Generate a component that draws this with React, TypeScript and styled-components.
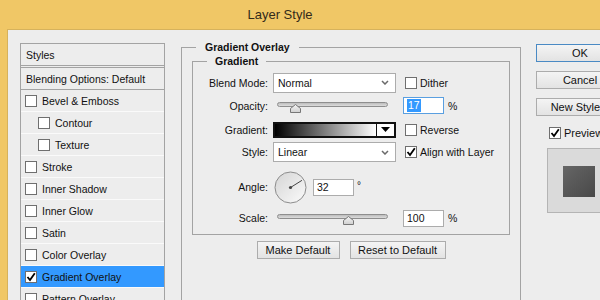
import React from "react";
import styled, { createGlobalStyle } from "styled-components";

const GlobalStyle = createGlobalStyle`
  html, body { margin: 0; padding: 0; }
  body {
    width: 600px;
    height: 300px;
    overflow: hidden;
    font-family: "Liberation Sans", Arial, sans-serif;
    font-size: 10.5px;
    color: #111;
  }
`;

const styleItems = [
  { label: "Bevel & Emboss" },
  { label: "Contour", sub: true },
  { label: "Texture", sub: true },
  { label: "Stroke" },
  { label: "Inner Shadow" },
  { label: "Inner Glow" },
  { label: "Satin" },
  { label: "Color Overlay" },
  { label: "Gradient Overlay", checked: true, selected: true },
  { label: "Pattern Overlay" },
  { label: "Outer Glow" },
  { label: "Drop Shadow" },
];

const Window = styled.div`
  width: 600px;
  height: 300px;
  background: #f0c766;
  display: flex;
  flex-direction: column;
  overflow: hidden;
`;

const TitleBar = styled.div`
  flex: none;
  height: 29px;
  display: flex;
  align-items: center;
  justify-content: center;
  padding-right: 40px;
  font-size: 13px;
  color: #332b1a;
`;

const Body = styled.div`
  flex: 1;
  min-height: 0;
  margin-left: 7px;
  background: #ededed;
  border-top: 1px solid #d6b25c;
  border-left: 1px solid #d6b25c;
  display: flex;
  padding-left: 12px;
  overflow: hidden;
`;

const StylesPanel = styled.div`
  flex: none;
  width: 145px;
  box-sizing: border-box;
  margin-top: 13px;
  border: 1px solid #a3a3a3;
  border-bottom: none;
  height: 300px;
`;

const PanelHead = styled.div<{ $first?: boolean }>`
  height: 21px;
  display: flex;
  align-items: center;
  padding-left: 5px;
  border-bottom: 1px solid #a3a3a3;
  border-top: ${(p) => (p.$first ? "none" : "1px solid #a3a3a3")};
  margin-top: ${(p) => (p.$first ? 0 : 1)}px;
`;

const StyleRow = styled.div<{ $sub?: boolean; $selected?: boolean }>`
  height: 21px;
  display: flex;
  align-items: center;
  gap: 5px;
  padding-left: ${(p) => (p.$sub ? 17 : 4)}px;
  border-bottom: 1px solid #fafafa;
  background: ${(p) => (p.$selected ? "#3399ff" : "transparent")};
  color: #111;
`;

const Box = styled.span`
  flex: none;
  width: 12px;
  height: 12px;
  box-sizing: border-box;
  border: 1px solid #6f6f6f;
  background: #fff;
  display: inline-flex;
  align-items: center;
  justify-content: center;
`;

const Check = ({ checked }: { checked?: boolean }) => (
  <Box>
    {checked && (
      <svg width="10" height="10" viewBox="0 0 10 10">
        <path d="M1.5 5 L4 8 L8.8 1.2" fill="none" stroke="#000" strokeWidth="1.8" />
      </svg>
    )}
  </Box>
);

const MainCol = styled.div`
  flex: none;
  width: 340px;
  margin-left: 16px;
  margin-top: 10px;
`;

const Group = styled.fieldset<{ $outer?: boolean }>`
  margin: 0;
  min-width: 0;
  box-sizing: border-box;
  border: 1px solid #a3a3a3;
  padding: ${(p) => (p.$outer ? "0 10px" : "4px 0 9px")};
  height: ${(p) => (p.$outer ? "300px" : "auto")};
`;

const GroupTitle = styled.legend<{ $indent: number; $pad: number }>`
  margin-left: ${(p) => p.$indent}px;
  padding: 0 ${(p) => p.$pad}px;
  font-weight: bold;
  line-height: 14px;
  font-size: 10.5px;
  color: #111;
`;

const Row = styled.div<{ $h: number }>`
  height: ${(p) => p.$h}px;
  display: flex;
  align-items: center;
`;

const Label = styled.span`
  flex: none;
  width: 80px;
  box-sizing: border-box;
  padding-right: 5px;
  text-align: right;
`;

const SelectBox = styled.div`
  flex: none;
  width: 123px;
  height: 20px;
  box-sizing: border-box;
  border: 1px solid #acacac;
  background: #fff;
  display: flex;
  align-items: center;
  justify-content: space-between;
  padding: 0 6px 0 4px;
`;

const Chevron = () => (
  <svg width="8" height="5" viewBox="0 0 8 5">
    <polyline points="1,1 4,4 7,1" fill="none" stroke="#6a6a6a" strokeWidth="1.5" />
  </svg>
);

const Side = styled.label<{ $ml: number }>`
  display: flex;
  align-items: center;
  gap: 3px;
  margin-left: ${(p) => p.$ml}px;
`;

const SliderBox = styled.div`
  flex: none;
  position: relative;
  width: 123px;
  height: 14px;
`;

const Track = styled.div`
  margin: 3px 8px 0 4px;
  height: 5px;
  box-sizing: border-box;
  border: 1px solid #8e8e8e;
  border-radius: 3px;
  background: linear-gradient(#bdbdbd, #dcdcdc);
`;

const Thumb = styled.svg`
  position: absolute;
  top: 5px;
  margin-left: -5.5px;
`;

const Slider = ({ at }: { at: number }) => (
  <SliderBox>
    <Track />
    <Thumb width="11" height="9" viewBox="0 0 11 9" style={{ left: 4 + at * 111 }}>
      <defs>
        <linearGradient id="tg" x1="0" y1="0" x2="0" y2="1">
          <stop offset="0" stopColor="#f6f6f6" />
          <stop offset="1" stopColor="#cfcfcf" />
        </linearGradient>
      </defs>
      <path d="M5.5 0.5 L10.5 4.5 L10.5 8.5 L0.5 8.5 L0.5 4.5 Z" fill="url(#tg)" stroke="#777" />
    </Thumb>
  </SliderBox>
);

const NumInput = styled.div<{ $focus?: boolean; $ml: number }>`
  flex: none;
  width: 41px;
  height: 17px;
  box-sizing: border-box;
  margin-left: ${(p) => p.$ml}px;
  border: 1px solid ${(p) => (p.$focus ? "#5a9fe0" : "#acacac")};
  background: #fff;
  display: flex;
  align-items: center;
  padding-left: 3px;
`;

const Selected = styled.span`
  background: #3399ff;
  color: #fff;
  line-height: 13px;
  padding: 0 1px;
`;

const Unit = styled.span`
  margin-left: 4px;
`;

const Degree = styled.span`
  margin-left: 3px;
  align-self: flex-start;
  margin-top: 17px;
  font-size: 10px;
`;

const GradientPick = styled.div`
  flex: none;
  width: 123px;
  height: 16px;
  box-sizing: border-box;
  border: 2px solid #111;
  display: flex;
`;

const Ramp = styled.div`
  flex: 1;
  background: linear-gradient(to right, #000, #fff);
`;

const Drop = styled.div`
  flex: none;
  width: 17px;
  border-left: 1px solid #111;
  background: #fff;
  display: flex;
  align-items: center;
  justify-content: center;
`;

const Dial = styled.svg`
  flex: none;
  margin-left: 1px;
`;

const ButtonRow = styled.div`
  display: flex;
  justify-content: center;
  gap: 10px;
  margin-top: 6px;
`;

const Button = styled.div<{ $w: number; $focus?: boolean }>`
  flex: none;
  width: ${(p) => p.$w}px;
  height: 18px;
  box-sizing: border-box;
  border: 1px solid ${(p) => (p.$focus ? "#4a8ac4" : "#acacac")};
  background: linear-gradient(#f4f4f4, #e3e3e3);
  display: flex;
  align-items: center;
  justify-content: center;
  white-space: nowrap;
  font-size: 11px;
`;

const RightCol = styled.div`
  flex: none;
  width: 88px;
  margin-left: 15px;
  margin-top: 14px;
  display: flex;
  flex-direction: column;
  gap: 9px;
`;

const PreviewCheck = styled.label`
  display: flex;
  align-items: center;
  gap: 3px;
  margin: 2px 0 0 13px;
  font-size: 11px;
`;

const PreviewBox = styled.div`
  margin-left: 11px;
  width: 80px;
  height: 65px;
  box-sizing: border-box;
  border: 1px solid #b4b4b4;
  background: #dadada;
  padding: 17px 0 0 15px;
`;

const Swatch = styled.div`
  width: 32px;
  height: 31px;
  background: linear-gradient(to bottom right, #666, #484848);
`;

export default function App() {
  const angle = 32;
  const rad = (angle * Math.PI) / 180;
  return (
    <>
      <GlobalStyle />
      <Window>
        <TitleBar>Layer Style</TitleBar>
        <Body>
          <StylesPanel>
            <PanelHead $first>Styles</PanelHead>
            <PanelHead>Blending Options: Default</PanelHead>
            {styleItems.map((it) => (
              <StyleRow key={it.label} $sub={it.sub} $selected={it.selected}>
                <Check checked={it.checked} />
                {it.label}
              </StyleRow>
            ))}
          </StylesPanel>

          <MainCol>
            <Group $outer>
              <GroupTitle $indent={4} $pad={9}>Gradient Overlay</GroupTitle>
              <Group>
                <GroupTitle $indent={14} $pad={8}>Gradient</GroupTitle>
                <Row $h={21}>
                  <Label>Blend Mode:</Label>
                  <SelectBox>
                    Normal
                    <Chevron />
                  </SelectBox>
                  <Side $ml={9}>
                    <Check />
                    Dither
                  </Side>
                </Row>
                <Row $h={25}>
                  <Label>Opacity:</Label>
                  <Slider at={0.17} />
                  <NumInput $focus $ml={7}>
                    <Selected>17</Selected>
                  </NumInput>
                  <Unit>%</Unit>
                </Row>
                <Row $h={23}>
                  <Label>Gradient:</Label>
                  <GradientPick>
                    <Ramp />
                    <Drop>
                      <svg width="9" height="5" viewBox="0 0 9 5">
                        <path d="M0 0 L9 0 L4.5 5 Z" fill="#000" />
                      </svg>
                    </Drop>
                  </GradientPick>
                  <Side $ml={9}>
                    <Check />
                    Reverse
                  </Side>
                </Row>
                <Row $h={22}>
                  <Label>Style:</Label>
                  <SelectBox>
                    Linear
                    <Chevron />
                  </SelectBox>
                  <Side $ml={9}>
                    <Check checked />
                    Align with Layer
                  </Side>
                </Row>
                <Row $h={48}>
                  <Label>Angle:</Label>
                  <Dial width="33" height="33" viewBox="0 0 33 33">
                    <defs>
                      <linearGradient id="dg" x1="0" y1="0" x2="1" y2="1">
                        <stop offset="0" stopColor="#d4d4d4" />
                        <stop offset="1" stopColor="#fbfbfb" />
                      </linearGradient>
                    </defs>
                    <circle cx="16.5" cy="16.5" r="15.5" fill="url(#dg)" stroke="#8c8c8c" />
                    <line
                      x1="16.5"
                      y1="16.5"
                      x2={16.5 + 13.5 * Math.cos(rad)}
                      y2={16.5 - 13.5 * Math.sin(rad)}
                      stroke="#444"
                    />
                    <circle cx="16.5" cy="16.5" r="1.6" fill="#444" />
                  </Dial>
                  <NumInput $ml={6}>32</NumInput>
                  <Degree>°</Degree>
                </Row>
                <Row $h={14}>
                  <Label>Scale:</Label>
                  <Slider at={(100 - 10) / 140} />
                  <NumInput $ml={7}>100</NumInput>
                  <Unit>%</Unit>
                </Row>
              </Group>
              <ButtonRow>
                <Button $w={83}>Make Default</Button>
                <Button $w={96}>Reset to Default</Button>
              </ButtonRow>
            </Group>
          </MainCol>

          <RightCol>
            <Button $w={88} $focus>OK</Button>
            <Button $w={88}>Cancel</Button>
            <Button $w={88}>New Style...</Button>
            <PreviewCheck>
              <Check checked />
              Preview
            </PreviewCheck>
            <PreviewBox>
              <Swatch />
            </PreviewBox>
          </RightCol>
        </Body>
      </Window>
    </>
  );
}
